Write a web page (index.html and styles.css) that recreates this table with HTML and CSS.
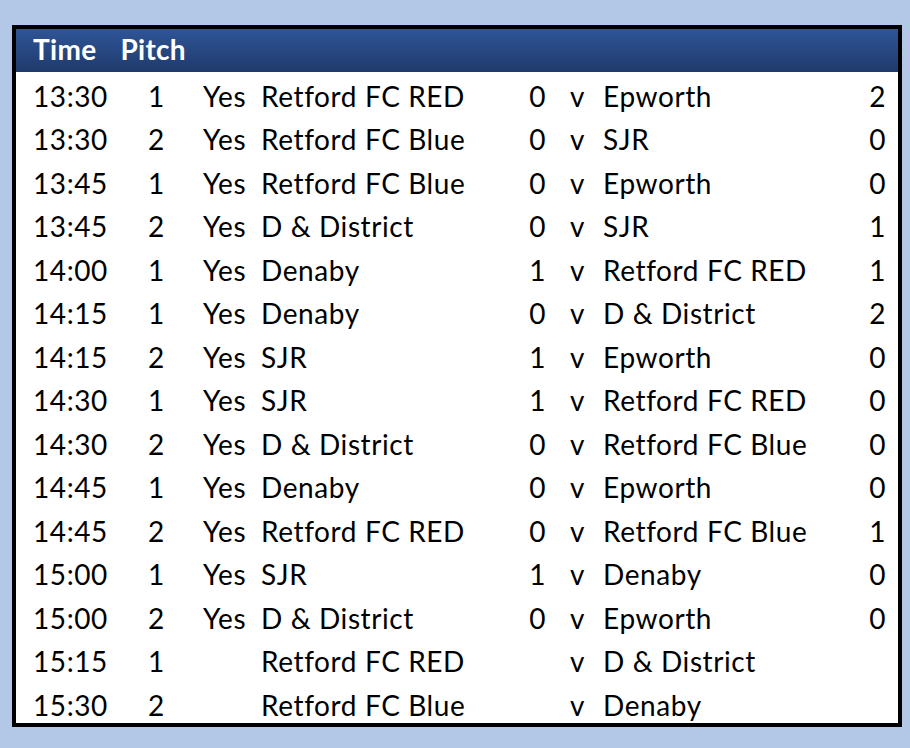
FILE: index.html
```html
<!DOCTYPE html>
<html>
<head>
<meta charset="utf-8">
<link rel="stylesheet" href="styles.css">
</head>
<body>
<div class="board">
  <div class="head">
    <span class="h-time">Time</span>
    <span class="h-pitch">Pitch</span>
  </div>
  <table class="fixtures">
    <colgroup>
      <col class="c-time"><col class="c-pitch"><col class="c-yes"><col class="c-home"><col class="c-hs"><col class="c-v"><col class="c-away"><col class="c-as">
    </colgroup>
    <tbody>
      <tr><td>13:30</td><td>1</td><td>Yes</td><td>Retford FC RED</td><td class="sc">0</td><td class="v">v</td><td>Epworth</td><td class="sc2">2</td></tr>
      <tr><td>13:30</td><td>2</td><td>Yes</td><td>Retford FC Blue</td><td class="sc">0</td><td class="v">v</td><td>SJR</td><td class="sc2">0</td></tr>
      <tr><td>13:45</td><td>1</td><td>Yes</td><td>Retford FC Blue</td><td class="sc">0</td><td class="v">v</td><td>Epworth</td><td class="sc2">0</td></tr>
      <tr><td>13:45</td><td>2</td><td>Yes</td><td>D &amp; District</td><td class="sc">0</td><td class="v">v</td><td>SJR</td><td class="sc2">1</td></tr>
      <tr><td>14:00</td><td>1</td><td>Yes</td><td>Denaby</td><td class="sc">1</td><td class="v">v</td><td>Retford FC RED</td><td class="sc2">1</td></tr>
      <tr><td>14:15</td><td>1</td><td>Yes</td><td>Denaby</td><td class="sc">0</td><td class="v">v</td><td>D &amp; District</td><td class="sc2">2</td></tr>
      <tr><td>14:15</td><td>2</td><td>Yes</td><td>SJR</td><td class="sc">1</td><td class="v">v</td><td>Epworth</td><td class="sc2">0</td></tr>
      <tr><td>14:30</td><td>1</td><td>Yes</td><td>SJR</td><td class="sc">1</td><td class="v">v</td><td>Retford FC RED</td><td class="sc2">0</td></tr>
      <tr><td>14:30</td><td>2</td><td>Yes</td><td>D &amp; District</td><td class="sc">0</td><td class="v">v</td><td>Retford FC Blue</td><td class="sc2">0</td></tr>
      <tr><td>14:45</td><td>1</td><td>Yes</td><td>Denaby</td><td class="sc">0</td><td class="v">v</td><td>Epworth</td><td class="sc2">0</td></tr>
      <tr><td>14:45</td><td>2</td><td>Yes</td><td>Retford FC RED</td><td class="sc">0</td><td class="v">v</td><td>Retford FC Blue</td><td class="sc2">1</td></tr>
      <tr><td>15:00</td><td>1</td><td>Yes</td><td>SJR</td><td class="sc">1</td><td class="v">v</td><td>Denaby</td><td class="sc2">0</td></tr>
      <tr><td>15:00</td><td>2</td><td>Yes</td><td>D &amp; District</td><td class="sc">0</td><td class="v">v</td><td>Epworth</td><td class="sc2">0</td></tr>
      <tr><td>15:15</td><td>1</td><td></td><td>Retford FC RED</td><td class="sc"></td><td class="v">v</td><td>D &amp; District</td><td class="sc2"></td></tr>
      <tr><td>15:30</td><td>2</td><td></td><td>Retford FC Blue</td><td class="sc"></td><td class="v">v</td><td>Denaby</td><td class="sc2"></td></tr>
    </tbody>
  </table>
</div>
</body>
</html>
```

FILE: styles.css
```css
html, body {
  margin: 0;
  padding: 0;
  background: #b3c7e7;
}
body {
  padding: 25px 8px 0 12px;
  font-family: Lato, "Open Sans", sans-serif;
}
.board {
  width: 882px;
  height: 694px;
  border: 4px solid #000;
  background: #fff;
  overflow: hidden;
}
.head {
  height: 43px;
  background: linear-gradient(#2f5597, #1f3a6c);
  color: #fff;
  font-weight: 700;
  font-size: 28px;
  letter-spacing: 0.3px;
  display: flex;
  align-items: center;
  padding-left: 17px;
  padding-bottom: 3px;
  box-sizing: border-box;
  gap: 24px;
}
.fixtures {
  border-collapse: collapse;
  table-layout: fixed;
  width: 882px;
  margin-top: 2px;
  font-size: 28px;
  letter-spacing: 0.6px;
  color: #000;
}
.fixtures td {
  height: 43.5px;
  padding: 0;
  white-space: nowrap;
  vertical-align: middle;
}
.c-time { width: 124px; }
.c-pitch { width: 55px; }
.c-yes { width: 60px; }
.c-home { width: 245px; }
.c-hs { width: 56px; }
.c-v { width: 39px; }
.c-away { width: 245px; }
.c-as { width: 58px; }
.fixtures td:nth-child(1) { padding-left: 17px; }
.fixtures td:nth-child(2) { padding-left: 8px; }
.fixtures td:nth-child(3) { padding-left: 8px; }
.fixtures td:nth-child(4) { padding-left: 6px; }
.fixtures td.sc { text-align: right; padding-right: 10px; }
.fixtures td.v { padding-left: 14px; }
.fixtures td:nth-child(7) { padding-left: 8px; }
.fixtures td.sc2 { text-align: right; padding-right: 12px; }
```
